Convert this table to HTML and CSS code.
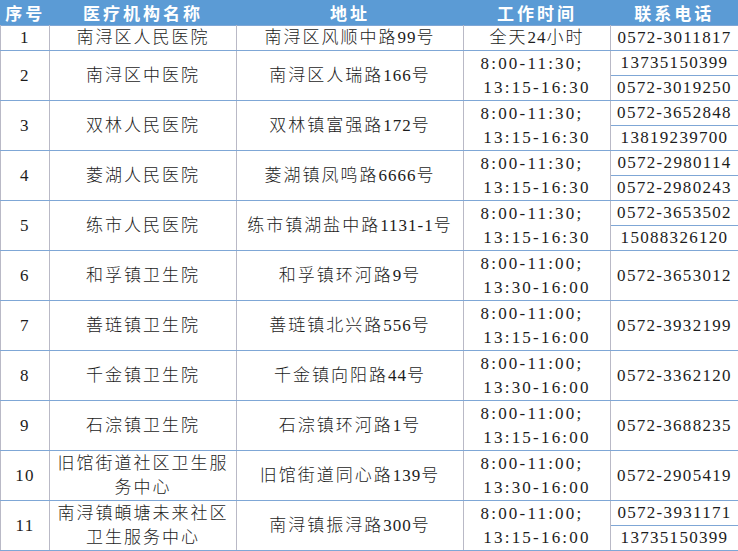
FILE: index.html
```html
<!DOCTYPE html>
<html lang="zh-CN">
<head>
<meta charset="utf-8">
<title>医疗机构</title>
<link rel="stylesheet" href="styles.css">
</head>
<body>
<table class="tbl">
  <colgroup>
    <col class="c-no"><col class="c-name"><col class="c-addr"><col class="c-time"><col class="c-tel">
  </colgroup>
  <thead>
    <tr class="head">
      <th>序号</th><th>医疗机构名称</th><th>地址</th><th>工作时间</th><th>联系电话</th>
    </tr>
  </thead>
  <tbody>
    <tr class="r1">
      <td class="num">1</td>
      <td>南浔区人民医院</td>
      <td>南浔区风顺中路<span class="n">99</span>号</td>
      <td>全天<span class="n">24</span>小时</td>
      <td class="num">0572-3011817</td>
    </tr>
    <tr>
      <td class="num">2</td>
      <td>南浔区中医院</td>
      <td>南浔区人瑞路<span class="n">166</span>号</td>
      <td class="num time"><div class="ln l1">8:00-11:30;</div><div class="ln">13:15-16:30</div></td>
      <td class="num tel2"><div class="ph">13735150399</div><div class="ph sep">0572-3019250</div></td>
    </tr>
    <tr>
      <td class="num">3</td>
      <td>双林人民医院</td>
      <td>双林镇富强路<span class="n">172</span>号</td>
      <td class="num time"><div class="ln l1">8:00-11:30;</div><div class="ln">13:15-16:30</div></td>
      <td class="num tel2"><div class="ph">0572-3652848</div><div class="ph sep">13819239700</div></td>
    </tr>
    <tr>
      <td class="num">4</td>
      <td>菱湖人民医院</td>
      <td>菱湖镇凤鸣路<span class="n">6666</span>号</td>
      <td class="num time"><div class="ln l1">8:00-11:30;</div><div class="ln">13:15-16:30</div></td>
      <td class="num tel2"><div class="ph">0572-2980114</div><div class="ph sep">0572-2980243</div></td>
    </tr>
    <tr>
      <td class="num">5</td>
      <td>练市人民医院</td>
      <td>练市镇湖盐中路<span class="n">1131-1</span>号</td>
      <td class="num time"><div class="ln l1">8:00-11:30;</div><div class="ln">13:15-16:30</div></td>
      <td class="num tel2"><div class="ph">0572-3653502</div><div class="ph sep">15088326120</div></td>
    </tr>
    <tr>
      <td class="num">6</td>
      <td>和孚镇卫生院</td>
      <td>和孚镇环河路<span class="n">9</span>号</td>
      <td class="num time"><div class="ln l1">8:00-11:00;</div><div class="ln">13:30-16:00</div></td>
      <td class="num">0572-3653012</td>
    </tr>
    <tr>
      <td class="num">7</td>
      <td>善琏镇卫生院</td>
      <td>善琏镇北兴路<span class="n">556</span>号</td>
      <td class="num time"><div class="ln l1">8:00-11:00;</div><div class="ln">13:15-16:00</div></td>
      <td class="num">0572-3932199</td>
    </tr>
    <tr>
      <td class="num">8</td>
      <td>千金镇卫生院</td>
      <td>千金镇向阳路<span class="n">44</span>号</td>
      <td class="num time"><div class="ln l1">8:00-11:00;</div><div class="ln">13:30-16:00</div></td>
      <td class="num">0572-3362120</td>
    </tr>
    <tr>
      <td class="num">9</td>
      <td>石淙镇卫生院</td>
      <td>石淙镇环河路<span class="n">1</span>号</td>
      <td class="num time"><div class="ln l1">8:00-11:00;</div><div class="ln">13:15-16:00</div></td>
      <td class="num">0572-3688235</td>
    </tr>
    <tr>
      <td class="num">10</td>
      <td>旧馆街道社区卫生服务中心</td>
      <td>旧馆街道同心路<span class="n">139</span>号</td>
      <td class="num time"><div class="ln l1">8:00-11:00;</div><div class="ln">13:30-16:00</div></td>
      <td class="num">0572-2905419</td>
    </tr>
    <tr>
      <td class="num">11</td>
      <td>南浔镇頔塘未来社区卫生服务中心</td>
      <td>南浔镇振浔路<span class="n">300</span>号</td>
      <td class="num time"><div class="ln l1">8:00-11:00;</div><div class="ln">13:15-16:00</div></td>
      <td class="num tel2"><div class="ph">0572-3931171</div><div class="ph sep">13735150399</div></td>
    </tr>
  </tbody>
</table>
</body>
</html>
```

FILE: styles.css
```css
html, body {
  margin: 0;
  padding: 0;
  background: #ffffff;
}

.tbl {
  border-collapse: collapse;
  table-layout: fixed;
  width: 738px;
  border: 1px solid #5b9bd5;
  font-family: "Liberation Serif", "Noto Sans CJK SC", serif;
  font-size: 17px;
  font-weight: 300;
  color: #1c1c1c;
}

.c-no { width: 49px; }
.c-name { width: 187px; }
.c-addr { width: 227px; }
.c-time { width: 147px; }
.c-tel { width: 128px; }

.head th {
  background: #5b9bd5;
  color: #ffffff;
  height: 24px;
  padding: 0;
  font-family: "Noto Sans CJK SC", sans-serif;
  font-weight: 700;
  font-size: 17px;
  letter-spacing: 3px;
  line-height: 24px;
  text-align: center;
  border: none;
}

td {
  height: 49px;
  padding: 0 4px;
  text-align: center;
  vertical-align: middle;
  line-height: 24px;
  letter-spacing: 2px;
  border-top: 1px solid #7fa7d6;
  border-bottom: 1px solid #7fa7d6;
  border-left: 1px solid #b9b9c6;
  border-right: 1px solid #b9b9c6;
}

.r1 td {
  height: 24px;
}

td.num {
  letter-spacing: 1.3px;
}

td.time {
  letter-spacing: 2.2px;
}

.n {
  letter-spacing: 1px;
}

.ln {
  line-height: 24px;
  white-space: nowrap;
}

.l1 {
  padding-right: 10px;
}

td.tel2 {
  padding: 0;
}

.ph {
  height: 24px;
  line-height: 24px;
  white-space: nowrap;
}

.ph.sep {
  border-top: 1px solid #7fa7d6;
}
```
